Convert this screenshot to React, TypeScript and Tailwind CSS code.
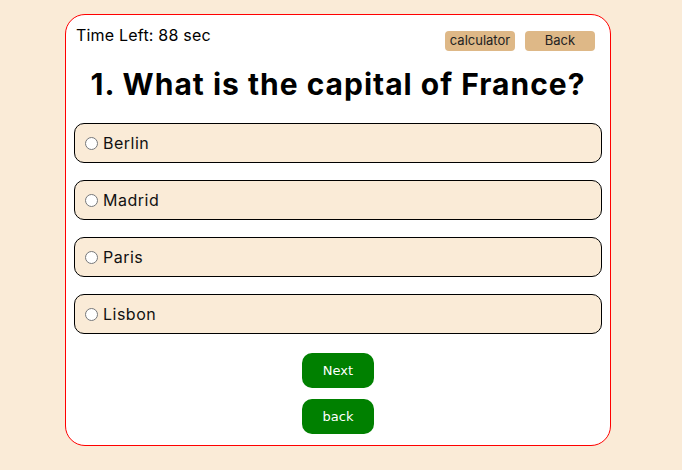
import React, { useState } from 'react';

const options = ['Berlin', 'Madrid', 'Paris', 'Lisbon'];

export default function App() {
  const [picked, setPicked] = useState<string | null>(null);

  return (
    <div className="min-h-[470px] bg-[#faebd7] pt-[14px] font-['Inter',sans-serif]">
      <div className="ml-[65px] w-[546px] h-[432px] bg-white border border-[#ff0000] rounded-[20px] px-[8px] pt-[8px]">
        {/* header */}
        <div className="flex justify-between items-start">
          <div className="text-[16px] leading-[24px] tracking-[0.2px] text-black pl-[2px]">Time Left: 88 sec</div>
          <div className="flex gap-[10px] mt-[8px] mr-[7px]">
            <button className="w-[70px] h-[20px] bg-[#deb887] rounded-[4px] text-[13px] text-[#222]">calculator</button>
            <button className="w-[70px] h-[20px] bg-[#deb887] rounded-[4px] text-[13px] text-[#222]">Back</button>
          </div>
        </div>

        <h1 className="text-center font-bold text-[30px] leading-[36px] tracking-[1px] mt-[15px] text-black">
          1. What is the capital of France?
        </h1>

        <div className="flex flex-col gap-[17px] mt-[21px]">
          {options.map((o) => (
            <label
              key={o}
              className="flex items-center h-[40px] w-[528px] border border-black rounded-[10px] bg-[#faebd7] pl-[10px] text-[16px] tracking-[0.5px] text-[#111] cursor-pointer"
            >
              <input
                type="radio"
                name="answer"
                checked={picked === o}
                onChange={() => setPicked(o)}
                className="w-[13px] h-[13px] m-0 mr-[5px]"
              />
              {o}
            </label>
          ))}
        </div>

        <div className="flex flex-col items-center gap-[11px] mt-[19px]">
          <button className="w-[72px] h-[35px] bg-[#008000] rounded-[10px] text-white text-[13px] font-['DejaVu_Sans',sans-serif]">
            Next
          </button>
          <button className="w-[72px] h-[35px] bg-[#008000] rounded-[10px] text-white text-[13px] font-['DejaVu_Sans',sans-serif]">
            back
          </button>
        </div>
      </div>
    </div>
  );
}
